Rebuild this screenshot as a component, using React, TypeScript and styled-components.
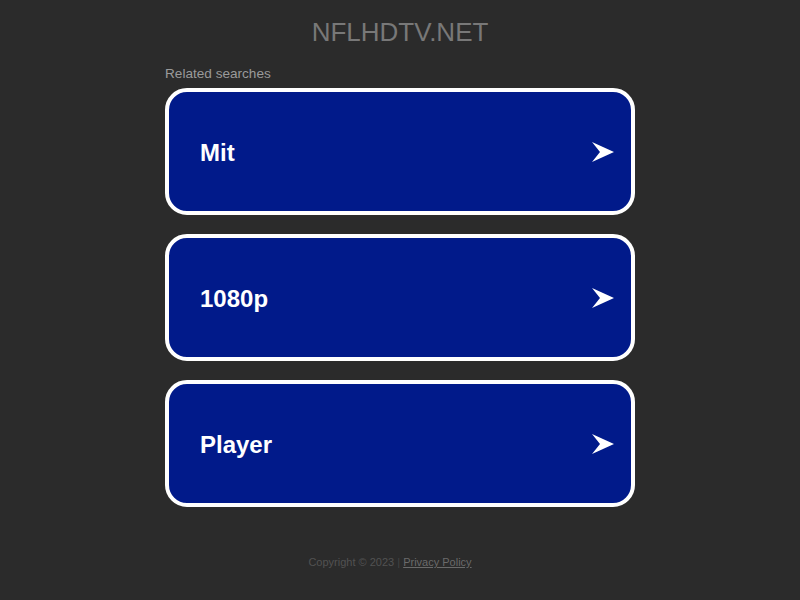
import styled, { createGlobalStyle } from "styled-components";

const GlobalStyle = createGlobalStyle`
  html, body {
    margin: 0;
    padding: 0;
    background: #2b2b2b;
    font-family: "Liberation Sans", Arial, sans-serif;
  }
`;

const searches = ["Mit", "1080p", "Player"];

const ArrowIcon = () => (
  <svg width="22" height="20" viewBox="0 0 22 20">
    <path d="M0 0 L22 10 L0 20 L8 10 Z" fill="#fff" />
  </svg>
);

const App = () => {
  return (
    <Page>
      <GlobalStyle />
      <Title>NFLHDTV.NET</Title>
      <Content>
        <Label>Related searches</Label>
        <CardList>
          {searches.map((s) => (
            <Card key={s} href="#">
              <CardText>{s}</CardText>
              <ArrowIcon />
            </Card>
          ))}
        </CardList>
      </Content>
      <Footer>
        Copyright © 2023 <Sep>|</Sep> <FooterLink href="#">Privacy Policy</FooterLink>
      </Footer>
    </Page>
  );
};

export default App;

const Page = styled.div`
  width: 800px;
  height: 600px;
  display: flex;
  flex-direction: column;
  align-items: center;
`;

const Title = styled.h1`
  margin: 17px 0 0;
  font-size: 26px;
  line-height: 30px;
  font-weight: 400;
  color: #787878;
`;

const Content = styled.div`
  width: 470px;
  margin-top: 19px;
  display: flex;
  flex-direction: column;
`;

const Label = styled.div`
  font-size: 13.6px;
  line-height: 16px;
  color: #9a9a9a;
  margin-bottom: 6px;
`;

const CardList = styled.div`
  display: flex;
  flex-direction: column;
  gap: 19px;
`;

const Card = styled.a`
  box-sizing: border-box;
  height: 127px;
  display: flex;
  align-items: center;
  justify-content: space-between;
  padding: 0 17px 0 31px;
  background: #011a8a;
  border: 4px solid #fff;
  border-radius: 22px;
  text-decoration: none;
`;

const CardText = styled.span`
  color: #fff;
  font-size: 24px;
  font-weight: 700;
  padding-top: 2px;
`;

const Footer = styled.div`
  margin-top: 48px;
  margin-right: 20px;
  font-size: 11px;
  line-height: 14px;
  color: #525252;
`;

const Sep = styled.span`
  color: #444;
`;

const FooterLink = styled.a`
  color: #6a6a6a;
  text-decoration: underline;
`;
